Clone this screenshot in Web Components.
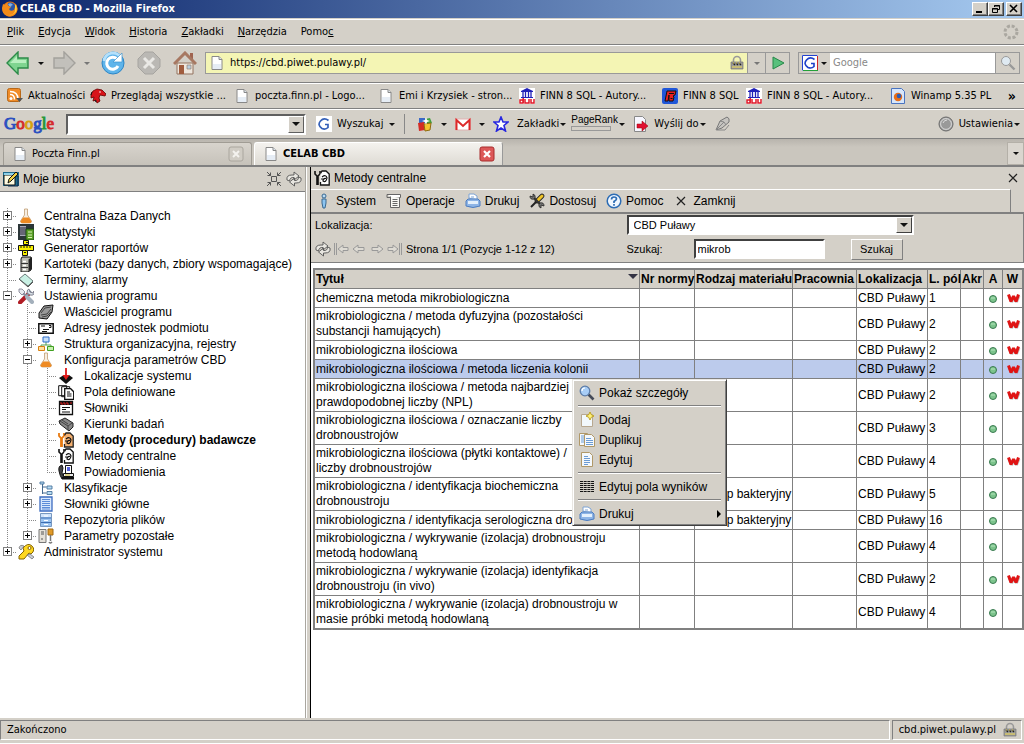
<!DOCTYPE html>
<html lang="pl">
<head>
<meta charset="utf-8">
<title>CELAB CBD - Mozilla Firefox</title>
<style>
html, body { margin: 0; height: 100%; }
body {
  --face: #d4d0c8; --shade: #808080; --ui: "DejaVu Sans Condensed", "Noto Sans", sans-serif; --app: "Liberation Sans", Arial, sans-serif;
  background: var(--face); color: #000; font: 11px/14px var(--ui); overflow: hidden;
}
</style>
</head>
<body>
<browser-window>
  <title-bar slot="bars" label="CELAB CBD - Mozilla Firefox"></title-bar>
  <menu-bar slot="bars"></menu-bar>
  <nav-bar slot="bars"></nav-bar>
  <bookmark-bar slot="bars">
    <bookmark-item icon="rss">Aktualności</bookmark-item>
    <bookmark-item icon="dino">Przeglądaj wszystkie ...</bookmark-item>
    <bookmark-item icon="page">poczta.finn.pl - Logo...</bookmark-item>
    <bookmark-item icon="page">Emi i Krzysiek - stron...</bookmark-item>
    <bookmark-item icon="duw">FINN 8 SQL - Autory...</bookmark-item>
    <bookmark-item icon="finn">FINN 8 SQL</bookmark-item>
    <bookmark-item icon="duw">FINN 8 SQL - Autory...</bookmark-item>
    <bookmark-item icon="winamp">Winamp 5.35 PL</bookmark-item>
  </bookmark-bar>
  <google-bar slot="bars"></google-bar>
  <tab-strip slot="bars">
    <page-tab>Poczta Finn.pl</page-tab>
    <page-tab active>CELAB CBD</page-tab>
  </tab-strip>
  <side-panel>
    <tree-node icon="flask" state="plus" label="Centralna Baza Danych" first></tree-node>
    <tree-node icon="stats" state="plus" label="Statystyki"></tree-node>
    <tree-node icon="generator" state="plus" label="Generator raportów"></tree-node>
    <tree-node icon="cabinet" state="plus" label="Kartoteki (bazy danych, zbiory wspomagające)"></tree-node>
    <tree-node icon="diamond" label="Terminy, alarmy"></tree-node>
    <tree-node icon="tools" state="minus" label="Ustawienia programu">
      <tree-node icon="owner" label="Właściciel programu"></tree-node>
      <tree-node icon="address" label="Adresy jednostek podmiotu"></tree-node>
      <tree-node icon="org" state="plus" label="Struktura organizacyjna, rejestry"></tree-node>
      <tree-node icon="flask" state="minus" label="Konfiguracja parametrów CBD">
        <tree-node icon="location" label="Lokalizacje systemu"></tree-node>
        <tree-node icon="fields" label="Pola definiowane"></tree-node>
        <tree-node icon="dict" label="Słowniki"></tree-node>
        <tree-node icon="rock" label="Kierunki badań"></tree-node>
        <tree-node icon="methodhot" label="Metody (procedury) badawcze" current></tree-node>
        <tree-node icon="method" label="Metody centralne"></tree-node>
        <tree-node icon="notify" label="Powiadomienia" last></tree-node>
      </tree-node>
      <tree-node icon="classes" state="plus" label="Klasyfikacje"></tree-node>
      <tree-node icon="list" state="plus" label="Słowniki główne"></tree-node>
      <tree-node icon="repo" label="Repozytoria plików"></tree-node>
      <tree-node icon="params" state="plus" label="Parametry pozostałe" last></tree-node>
    </tree-node>
    <tree-node icon="keys" state="plus" label="Administrator systemu" last></tree-node>
  </side-panel>
  <work-panel slot="main"></work-panel>
  <status-bar slot="status"></status-bar>
</browser-window>

<script>
const ICONS = {
  firefox: '<circle cx="8" cy="8" r="7.5" fill="#e8740c"/><circle cx="8.5" cy="6.5" r="5" fill="#2c57a8"/><path d="M6 3q3-2 5 1-2 0-2 2-2 0-3-3z" fill="#7fb2e8"/><path d="M1 3l2 1q1-2 3-2-1 2 1 3l2 1-2 2q1 3 5 1l2-6q3 5 0 9-4 5-9 3-5-2-5-8z" fill="#f28a1a"/><path d="M13 3q3 4 1 8-3 4-7 3 5 0 6-4z" fill="#ffd03c"/>',
  back: ['24 24', '<path d="M1 12L12 1v6h10v10H12v6z" fill="#7fd490" stroke="#2c8a48" stroke-width="1.4"/><path d="M4 12l7-7v4h9v3z" fill="#b9efc0"/>'],
  fwd: ['24 24', '<path d="M23 12L12 1v6H2v10h10v6z" fill="#c2c0bb" stroke="#a3a19c" stroke-width="1.4"/>'],
  reload: ['24 24', '<circle cx="12" cy="12" r="11" fill="#5fb4ea" stroke="#2d86c6"/><path d="M3 10a9 9 0 0 1 17-3" fill="none" stroke="#b4e0fb" stroke-width="3"/><path d="M17 15a6 6 0 1 1-1-7" fill="none" stroke="#fff" stroke-width="3"/><path d="M12 11h9V2z" fill="#fff" stroke="#3b94d0" stroke-width=".7"/>'],
  stop: ['24 24', '<path d="M8 1h8l7 7v8l-7 7H8l-7-7V8z" fill="#bab8b4" stroke="#a6a4a0"/><path d="M7 7l10 10M17 7L7 17" stroke="#e9e8e5" stroke-width="3"/>'],
  home: ['24 24', '<path d="M4 12h16v11H4z" fill="#ede6dd" stroke="#93735f"/><path d="M17 2h3v6h-3z" fill="#a06450"/><path d="M1 13L12 2l11 11" fill="none" stroke="#a77862" stroke-width="3"/><path d="M6 14h5v9H6z" fill="#a05c3e"/><path d="M14 14h4v4h-4z" fill="#b9cfe0" stroke="#8c7262" stroke-width=".6"/>'],
  page: '<path d="M3 1.5h7l3 3v10H3z" fill="#fff" stroke="#888"/><path d="M10 1.5v3h3" fill="#dde6ee" stroke="#888"/><path d="M4 9h8v5H4z" fill="#e6edf5"/>',
  lock: '<path d="M4.500 7V5a3.500 3.500 0 0 1 7 0v2" fill="none" stroke="#999" stroke-width="1.600"/><path d="M2 7h12v7H2z" fill="#9c9c98" stroke="#777" stroke-width=".7"/><path d="M4 8l2 2M7 8l2 2M10 8l2 2" stroke="#222" stroke-width="1.200"/><path d="M4 8h1M7 8h1M10 8h1M3 12h10" stroke="#f3dc50"/>',
  go: '<path d="M3 2l11 6-11 6z" fill="#58c07c" stroke="#278848"/>',
  g: '<path d="M0 0h16v16H0z" fill="#fff"/><path d="M.5 15.500V.5h15" fill="none" stroke="#2442d0"/><path d="M15.500 1v15" stroke="#d02626"/><path d="M1 15.500h15" stroke="#24a038"/><path d="M12.500 4.500Q8 1 4.500 5T6 12.500Q9.500 14 12 11.500V8.500H9" fill="none" stroke="#1c3fc8" stroke-width="1.600"/>',
  gplain: '<path d="M0 0h16v16H0z" fill="#fff"/><path d="M12.500 4.500Q8 1 4.500 5T6 12.500Q9.500 14 12 11.500V8.500H9" fill="none" stroke="#3460b8" stroke-width="1.700"/>',
  mag: '<path d="M9.500 9.500l5 5" stroke="#999" stroke-width="2.400"/><circle cx="6" cy="6" r="4.500" fill="#dfeaf2" stroke="#999"/>',
  throb: '<circle cx="8" cy="8" r="6" fill="none" stroke="#aaa7a0" stroke-width="3" stroke-dasharray="3 1.700"/>',
  rss: '<rect x=".5" y=".5" width="13" height="13" rx="2" fill="#f08c28" stroke="#b86818"/><circle cx="4" cy="10.500" r="1.500" fill="#fff"/><path d="M3 6.500q4.500 0 4.500 5M3 3.500q8 0 8 8" fill="none" stroke="#fff" stroke-width="1.500"/><path d="M9 10h7l-3.500 4z" fill="#555"/>',
  dino: '<path d="M1 6l2-3 4-2 5 1 4 4-1 2-5-1-1 3 1 3-3 2-1-3-3 1 1-4-3 1z" fill="#d8141a" stroke="#600" stroke-width=".8"/><path d="M2 4l-1 3M5 12l1 2" stroke="#111"/><circle cx="10" cy="4" r=".8" fill="#fff"/>',
  duw: '<path d="M0 0h16v16H0z" fill="#fff"/><path d="M8 0l6 3v1H2V3zM2 9h12v1H2z" fill="#2020b8"/><path d="M4 4v5M6.500 4v5M9.500 4v5M12 4v5" stroke="#2020b8" stroke-width="1.300"/><path d="M1 12h3v3H1zM6 11v4h4v-4M12 11v4h3v-4M4.200 10v5" fill="none" stroke="#e01828" stroke-width="1.500"/>',
  finn: '<rect width="16" height="16" rx="2" fill="#1f56d8"/><path d="M3 13L5 3h9l-1 4-2 1 1 1-1 4H7V7L6 13z" fill="#e82020" stroke="#111"/><path d="M7 5.500h5M8.500 10.500h2" stroke="#111"/>',
  winamp: '<path d="M1.500.5h10l3 3v12h-13z" fill="#d7e6fa" stroke="#4a74c0"/><circle cx="8" cy="9" r="4.200" fill="#e86e18"/><circle cx="9" cy="8" r="2.300" fill="#2c5cb4"/>',
  games: '<path d="M2 2h6v5H2z" fill="#3a68c8"/><path d="M8 3l5-1 2 5-5 2z" fill="#40a040"/><path d="M1 7l6-1 1 8-6 1z" fill="#d42c24"/><path d="M7 8l7-1-1 7-5 1z" fill="#f4c430" stroke="#906c10"/><path d="M9 1l1 3 3 1-3 1-1 3-1-3-3-1 3-1z" fill="#fff"/>',
  gmail: '<path d="M.5 3h15v11H.5z" fill="#fff" stroke="#e0b0b0"/><path d="M1.500 14V4L8 10l6.500-6v10" fill="none" stroke="#dc2a2a" stroke-width="2"/>',
  star: '<path d="M8 1l2 5h5l-4 3.500 1.500 5.500L8 12l-4.500 3L5 9.500 1 6h5z" fill="#fff" stroke="#2828e0" stroke-width="1.600"/>',
  send: '<path d="M1.500.5h8l3 3v12h-11z" fill="#f7f7ff" stroke="#888"/><path d="M4 8h5V5l6 5-6 5v-3H4z" fill="#e01030" stroke="#900" stroke-width=".5"/>',
  pencil: '<path d="M1 14l4-9 7-4q3 1 2 5l-7 6z" fill="#c6c4c0" stroke="#777"/><path d="M5 5l4 1 2 3M1 14l8-8M2 14h8l4-5" fill="none" stroke="#888"/>',
  orb: '<circle cx="8" cy="8" r="7" fill="#a6a6a6" stroke="#686868"/><circle cx="8" cy="8" r="5.400" fill="#999" stroke="#d8d8d8"/><path d="M5 7q1-3 4-3" fill="none" stroke="#ddd"/>',
  desk: '<path d="M0 1h16v14H0z" fill="#1f6a8c"/><path d="M1 4h11v10H1z" fill="#fffbe0" stroke="#111"/><path d="M1 2h12v2H1z" fill="#8fd0e8"/><path d="M5 12l1-4 7-7 2 2-7 7z" fill="#f0d040" stroke="#111"/><path d="M13 5h2v10H5" fill="none" stroke="#102848"/>',
  collapse: '<path d="M5.500 5.500h5v5h-5z" fill="none" stroke="#555"/><path d="M1 1l3.500 3.500M15 1l-3.500 3.500M1 15l3.500-3.500M15 15l-3.500-3.500M4.500 1.500v3h-3M11.500 1.500v3h3M4.500 14.500v-3h-3M11.500 14.500v-3h3" fill="none" stroke="#555"/>',
  refresh: '<path d="M1 9q-1-5 5-5h2V1l5 4-5 4V6.500Q4 6 3.500 10zM15 7q1 5-5 5H8.500v3l-5-4 5-4v2.500q4 .5 4-3.500z" fill="#e8e6e0" stroke="#555" stroke-width=".9"/>',
  flask: '<path d="M6.500 1h3v6l4 6q0 2-2 2h-7q-2 0-2-2l4-6z" fill="#f6eee2" stroke="#b99060" stroke-width=".7"/><path d="M5 9.500h6l2.500 4q0 1.500-2 1.500h-7q-2 0-2-1.500z" fill="#ee8a22"/>',
  stats: '<path d="M0 0h16v16H0z" fill="#2b3538"/><path d="M2 2h6v10H2z" fill="#aab"/><path d="M3 3v8M5 3v8M7 3v8" stroke="#223"/><path d="M8 5h8v11H8z" fill="#5aa028" stroke="#184810"/><path d="M10 8h4M10 11h4M10 13.500h4" stroke="#d9f0b4"/>',
  generator: '<path d="M.5 5.500h15v5H.5z" fill="#f8f000" stroke="#111"/><path d="M5.500.5h5v4h-5zM4.500 10.500h5v5h-5z" fill="#f8f000" stroke="#111"/><path d="M3 6v2M6 6v2M9 6v2M12 6v2M6 12.500h2M8 2.500h2" stroke="#111"/>',
  cabinet: '<path d="M4 1h9v13l-3 2H3V3z" fill="#bcbcb4" stroke="#111"/><path d="M10.500 3.500v12L14 13V1z" fill="#222"/><path d="M3 7.500h7M3 11.500h7" stroke="#333"/><path d="M5 5.500h3M5 9.500h3M5 13.500h3" stroke="#fff" stroke-width="1.500"/>',
  diamond: '<path d="M1 7l6-5 8 7-5 5z" fill="#c9f0e4" stroke="#6a7a78"/><path d="M1 7l9 8 5-5" fill="none" stroke="#555"/>',
  tools: '<path d="M2 14.500L10 6.500" stroke="#b01c24" stroke-width="4" stroke-linecap="round"/><path d="M8 8l5-5" stroke="#8a98a4" stroke-width="2"/><path d="M11 1l1 3 3 1 1-2q1 5-4 4L9 5q0-4 2-4z" fill="#d8e0e6" stroke="#667" stroke-width=".8"/><path d="M3 3l5 5" stroke="#8890a0" stroke-width="2.400"/><path d="M9 9l5 5" stroke="#a4b0bc" stroke-width="4" stroke-linecap="round"/><path d="M1 1h3l3 3-3 3-3-3z" fill="#e6eaee" stroke="#778" stroke-width=".8"/>',
  owner: '<path d="M1 9l5-7 9-1-1 7-5 7-8-1z" fill="#999" stroke="#111"/><path d="M3 9l4-5 6-1M3 11l6-1 4-5M4 13l5-1 4-4" fill="none" stroke="#444"/>',
  address: '<path d="M.8 3.800h14.400v9.400H.8z" fill="#fff" stroke="#111" stroke-width="1.500"/><path d="M3 6h4M11 5.500h2v2h-2M5 9.500h6M4 11.500h5" fill="none" stroke="#111"/>',
  org: '<path d="M8 6v3M3 12V9h10v3" fill="none" stroke="#58a050"/><path d="M5 1h6v5H5z" fill="#c8e0fa" stroke="#2c6cc8"/><path d="M.5 10.500h6v4h-6z" fill="#ffe0a0" stroke="#d88010"/><path d="M9.500 10.500h6v4h-6z" fill="#c8f0b0" stroke="#40a020"/>',
  location: '<path d="M1 10l5-3h5l4 3-7 6z" fill="#111"/><path d="M8 0v9" stroke="#e01818" stroke-width="1.800"/><path d="M4.500 7h7L8 12z" fill="#e01818"/>',
  fields: '<path d="M.7 1.700h8v10h-8zM3.700 2.700h8v10h-8z" fill="#fff" stroke="#111"/><path d="M6.700 4.700h6l3 3v7.600h-9z" fill="#fff" stroke="#111" stroke-width="1.300"/><path d="M9 8h3M9 10h4.500M9 12h4.500" stroke="#111"/>',
  dict: '<path d="M1.500 1.500h13v13h-13z" fill="#fff" stroke="#111" stroke-width="1.300"/><path d="M1 1h14v4H1z" fill="#111"/><path d="M3 2v2h2M6 2v2h2M9 2v2h2M13 2v2" fill="none" stroke="#e02020"/><path d="M4 7.500h8M4 9.500h4M4 12h8" stroke="#111"/>',
  rock: '<path d="M1 5l6-3 8 5v4l-4 4-9-7z" fill="#888" stroke="#222"/><path d="M2 5l8 5 4-3M10 10v4M4 4l6 4" stroke="#444" fill="none"/>',
  method: '<path d="M1 1v3l2 2v9M6 1v3L4 6v9" fill="none" stroke="#111" stroke-width="1.600"/><path d="M6.500 3.500L8 1h4l3.200 3v11H6.500v-3" fill="#fff" stroke="#111" stroke-width="1.300"/><path d="M8 7q4-3 5 1-1 5-4 3 0-3 3-2.500M7 9h4" fill="none" stroke="#111" stroke-width="1.200"/>',
  methodhot: '<path d="M1 1v3l2 2v9M6 1v3L4 6v9" fill="none" stroke="#e87a10" stroke-width="1.800"/><path d="M6.500 3.500L8 1h4l3.200 3v11H6.500v-3" fill="#f4b070" stroke="#222" stroke-width="1.300"/><path d="M8 7q4-3 5 1-1 5-4 3 0-3 3-2.500M7 9h4" fill="none" stroke="#111" stroke-width="1.200"/>',
  notify: '<path d="M4 1Q0 2 1 7t3 8l2-2-2-4 1-5z" fill="#444" stroke="#111"/><path d="M7.500 1.500h6v8h-6z" fill="#fff" stroke="#111"/><path d="M9 4h3M9 6h3" stroke="#2030d0" stroke-width="1.300"/><path d="M5.500 9.500h10v3h-10z" fill="#eee" stroke="#111"/><path d="M4 13h12v2.500H4z" fill="#111"/><path d="M7 11h5" stroke="#c8b020"/>',
  classes: '<path d="M4.500 3v11M4.500 7h4M4.500 13h4" fill="none" stroke="#446a90"/><path d="M2 2h4v2H2zM9 6h5v3H9zM9 11.500h5v3H9z" fill="#b8dcf4" stroke="#48749c" stroke-width=".9"/>',
  list: '<path d="M2 1h12v14H2z" fill="#d8e8fc" stroke="#3c6cc0" stroke-width="1.300"/><path d="M4 3.500h8M4 5.500h8M4 7.500h8M4 9.500h8M4 11.500h8M4 13h8" stroke="#5c8cd8"/>',
  repo: '<path d="M2.500 1.500h11v13h-11z" fill="#9cc4f0" stroke="#7898c0"/><path d="M3 2h10v3H3z" fill="#d0e4fa"/><path d="M3 6h10M3 10.500h10" stroke="#3c6cb0"/><path d="M6 4h4M6 8.500h4M6 12.500h4" stroke="#fff"/>',
  params: '<path d="M1 1.500h7v13H1z" fill="#e4e0d8" stroke="#777"/><path d="M3 4h3M3 6h3M3 11h2" stroke="#555"/><path d="M10 1h5v6h-5z" fill="#e09a28" stroke="#a06810"/><path d="M12.500 7v6M11 14q1 2 3 0" stroke="#777" stroke-width="1.500" fill="none"/>',
  keys: '<path d="M5 4q5-6 9-2t-1 8L11 9l-5 6H1v-3l5-5z" fill="#ffd820" stroke="#866400"/><circle cx="11.500" cy="4" r="1.500" fill="#fff" stroke="#866400"/><path d="M1 4q1-4 5-2L3 6zM9 11l5 4 2-2-4-3z" fill="#c8ccd4" stroke="#777" stroke-width=".8"/>',
  info: '<circle cx="8" cy="3" r="2" fill="#b9dcf5" stroke="#3a6890"/><path d="M6 6h4v4l-1 5H7l-1-5z" fill="#8cc4f0" stroke="#3a6890"/>',
  ops: '<path d="M1 1.500h13.500v3H6" fill="#fff" stroke="#666"/><path d="M1 1.500v3h3.500" fill="none" stroke="#666"/><path d="M4.500 3.500v11h9v-10" fill="#f8f8f4" stroke="#666"/><path d="M6.500 6.500h5M6.500 8.500h5M6.500 10.500h5M6.500 12.500h5" stroke="#666"/>',
  print: '<path d="M4 5V1h5l3 2v4z" fill="#fff" stroke="#7ea4d4"/><path d="M1 8l2-2h10l2 2v5q-7 3-14 0z" fill="#8db4e6" stroke="#4c7cc0"/><path d="M3 8h10v3H3z" fill="#e4f0fc"/><path d="M6 4h3M5.500 6h5" stroke="#7ea4d4"/>',
  custom: '<path d="M2 14L8 8" stroke="#222" stroke-width="2"/><path d="M8 8l5-5" stroke="#222" stroke-width="4.600" stroke-linecap="round"/><path d="M8.500 7.500L13 3" stroke="#f0c428" stroke-width="3" stroke-linecap="round"/><path d="M4 4l8 8" stroke="#333" stroke-width="2.400"/><path d="M1 3q0 4 4 3L6 5q1-3-2-4v3zM15 13q0-4-4-3l-1 1q-1 3 2 4v-3z" fill="#777" stroke="#222" stroke-width=".8"/>',
  help: '<circle cx="8" cy="8" r="6.800" fill="#f0f7ff" stroke="#2c6cb4" stroke-width="1.500"/><path d="M5.500 6.500Q5.500 4 8 4t2.500 2Q10.500 7 8 8.500V10M8 11v1.800" fill="none" stroke="#2c6cb4" stroke-width="1.700"/>',
  close: '<path d="M4 4l8 8M12 4l-8 8" stroke="#222" stroke-width="1.200"/>',
  first: '<path d="M1.500 2v12M3.500 2v12" stroke="#999"/><path d="M5 8l5-4v2.500h5v3h-5V12z" fill="#dedbd4" stroke="#999"/>',
  prev: '<path d="M2 8l5-4v2.500h6v3H7V12z" fill="#dedbd4" stroke="#999"/>',
  next: '<path d="M14 8L9 4v2.500H3v3h6V12z" fill="#dedbd4" stroke="#999"/>',
  last: '<path d="M14.500 2v12M12.500 2v12" stroke="#999"/><path d="M11 8L6 4v2.500H1v3h5V12z" fill="#dedbd4" stroke="#999"/>',
  dot: '<circle cx="8" cy="9" r="3.500" fill="#7cc48c" stroke="#3a7a50"/><path d="M6 8h4" stroke="#b4e4bc"/>',
  wmark: '<g fill="none" stroke-linejoin="bevel"><path d="M4 6l2.500 6L9 7l2.500 5L14 6" stroke="#888" stroke-width="3" opacity=".5"/><path d="M3.500 4.500L6 11.500 8.500 6 11 11.500l2.500-7" stroke="#e01414" stroke-width="3"/></g>',
  lens: '<path d="M9.500 9.500l5 5" stroke="#444a58" stroke-width="2.600"/><circle cx="6" cy="6" r="4.800" fill="#a8cdf6" stroke="#5c7ca8" stroke-width="1.300"/><path d="M3 6q0-3 3-3" fill="none" stroke="#fff" stroke-width="1.200"/>',
  add: '<path d="M2.500 2.500h11v12h-11z" fill="#f2f8fc" stroke="#b8a890"/><path d="M11 0l1.300 2.700L15 4l-2.700 1.300L11 8 9.700 5.300 7 4l2.700-1.300z" fill="#fff27a" stroke="#b89a18" stroke-width=".9"/>',
  copy: '<path d="M.5 1.500h8v12h-8z" fill="#f4f8fc" stroke="#b09868"/><path d="M2 4h3M2 6h3M2 8h3M2 10h3" stroke="#6c9cd4"/><path d="M5.500 2.500h7l3 3v9h-10z" fill="#f4f8fc" stroke="#b09868"/><path d="M7 6.500h5M7 8.500h7M7 10.500h7M7 12.500h7" stroke="#6c9cd4"/>',
  edit: '<path d="M2.500.5h8l3 3v11h-11z" fill="#f4f8fc" stroke="#b09868"/><path d="M5 4.500h4M5 6.500h6M5 8.500h6M5 10.500h6M5 12.500h4" stroke="#6c9cd4"/>',
  grid: '<path d="M1 2.500h14M1 4.500h14M1 6.500h14M1 8.500h14M1 10.500h14M1 12.500h14" stroke="#111" stroke-dasharray="3 .7"/>',
  tabclose: '<rect x="1" y="1" width="14" height="14" rx="2" fill="#d0ccc4" stroke="#aaa69e"/><path d="M5 5l6 6M11 5l-6 6" stroke="#f4f2ee" stroke-width="2"/>',
  tabclosehot: '<rect x="1" y="1" width="14" height="14" rx="2" fill="#dc5858" stroke="#a82c2c"/><path d="M5 5l6 6M11 5l-6 6" stroke="#fff" stroke-width="2.200"/>'
};

/* Registers an element whose shadow root is filled from its stylesheet and markup. */
function define(name, css, markup) {
  customElements.define(name, class extends HTMLElement {
    connectedCallback() {
      if (this.shadowRoot) return;
      const html = typeof markup === 'function' ? markup(this) : markup;
      this.attachShadow({ mode: 'open' }).innerHTML =
        `<style>:host,*{box-sizing:border-box}button,input,select{font:inherit;color:inherit;margin:0;padding:0;border:0;background:none;border-radius:0;outline:0}a{color:inherit;text-decoration:none}${css}</style>${html}`;
    }
  });
}

define('x-icon', ':host{display:block;flex:none;width:16px;height:16px}:host([big]){width:24px;height:24px}svg{display:block;width:100%;height:100%}', el => {
  const d = ICONS[el.getAttribute('name')];
  const [box, body] = Array.isArray(d) ? d : ['16 16', d];
  return `<svg viewBox="0 0 ${box}" aria-hidden="true">${body}</svg>`;
});
define('down-caret', ':host{display:block;flex:none;width:0;height:0;border:3px solid transparent;border-top-color:#111;border-bottom:0}:host([pale]){border-top-color:#777}:host([wide]){border-width:4px 4px 0}', '');

define('browser-window', `
:host{display:flex;flex-direction:column;height:100vh;min-width:0}
main{flex:1;display:flex;min-height:0;border-top:1px solid #808080}
.split{flex:none;width:6px;background:var(--face);border-left:1px solid #a9a69f;border-right:1px solid #000;box-shadow:inset 1px 0 #fff}`,
`<slot name="bars"></slot><main><slot></slot><div class="split"></div><slot name="main"></slot></main><slot name="status"></slot>`);

define('title-bar', `
:host{display:flex;align-items:center;height:18px;padding:0 2px;background:linear-gradient(90deg,#0a246a,#a6caf0);color:#fff;font-weight:bold}
h1{font:inherit;margin:0 auto 0 2px}
button{width:16px;height:14px;background:var(--face);border:1px solid;border-color:#fff #404040 #404040 #fff;box-shadow:inset -1px -1px #808080}
button+button+button{margin-left:2px}svg{display:block;margin:auto}`,
el => `<x-icon name="firefox"></x-icon><h1>${el.getAttribute('label')}</h1>
<button aria-label="Minimalizuj"><svg width="10" height="10"><path d="M1 8h6" stroke="#000" stroke-width="2"/></svg></button>
<button aria-label="Przywróć"><svg width="10" height="10"><path d="M3.500 3V1.500h5v4H7M3 2h6M1.500 4.500h5v4h-5zM1 5h6" fill="none" stroke="#000"/></svg></button>
<button aria-label="Zamknij"><svg width="10" height="10"><path d="M1 1l7 7M8 1L1 8" stroke="#000" stroke-width="1.600"/></svg></button>`);

define('menu-bar', `
:host{display:flex;align-items:center;height:26px;padding:0 5px 0 7px;border-top:1px solid #fff;border-bottom:1px solid #808080;margin-top:1px}
nav{display:flex;gap:14px;margin-right:auto}`,
`<nav><a href="#"><u>P</u>lik</a><a href="#"><u>E</u>dycja</a><a href="#"><u>W</u>idok</a><a href="#"><u>H</u>istoria</a><a href="#"><u>Z</u>akładki</a><a href="#"><u>N</u>arzędzia</a><a href="#">Pomo<u>c</u></a></nav><x-icon name="throb"></x-icon>`);

define('nav-bar', `
:host{display:flex;align-items:center;height:38px;padding:0 4px 2px 6px;border-top:1px solid #fff;border-bottom:1px solid #808080}
.tools{display:flex;align-items:center;gap:7px;margin-right:8px}.tools down-caret{margin:0 1px}.wide{margin-left:3px;display:flex;gap:12px}
.box{display:flex;height:22px;border:1px solid #999;align-items:stretch}
.url{flex:1;min-width:0;background:#f4f5b4;margin-right:8px}.search{flex:0 0 222px}
.url x-icon{align-self:center}.url>x-icon:first-child{margin:0 5px 0 3px}
input{flex:1;min-width:0}.search input{background:#fff;padding-left:3px;color:#888}input::placeholder{color:#888}
.box button{display:grid;place-items:center;background:var(--face);border-left:1px solid #999}
.drop{width:18px}.go{width:24px}.engine.engine{display:flex;align-items:center;gap:3px;width:31px;padding-left:3px;border:0}
.lock{margin-right:2px}`,
`<div class="tools"><x-icon big name="back"></x-icon><down-caret></down-caret><x-icon big name="fwd"></x-icon><down-caret pale></down-caret><span class="wide"><x-icon big name="reload"></x-icon><x-icon big name="stop"></x-icon><x-icon big name="home"></x-icon></span></div>
<div class="box url"><x-icon name="page"></x-icon><input aria-label="Adres" value="https://cbd.piwet.pulawy.pl/"><x-icon class="lock" name="lock"></x-icon><button class="drop" aria-label="Historia adresów"><down-caret pale></down-caret></button><button class="go" aria-label="Przejdź"><x-icon name="go"></x-icon></button></div>
<div class="box search"><button class="engine" aria-label="Wyszukiwarka"><x-icon name="g"></x-icon><down-caret></down-caret></button><input aria-label="Szukaj w Google" placeholder="Google"><button class="go" aria-label="Szukaj"><x-icon name="mag"></x-icon></button></div>`);

define('bookmark-bar', `
:host{display:grid;grid-template-columns:83px 144px 144px 141px 143px 84px 144px 1fr auto;align-items:center;height:26px;padding:0 8px 0 7px;border-top:1px solid #fff;border-bottom:1px solid #808080}
button{font-weight:bold;font-size:14px}`, `<slot></slot><button aria-label="Więcej zakładek">»</button>`);
define('bookmark-item', `:host{display:block;min-width:0}a{display:flex;align-items:center;gap:5px;white-space:nowrap}`,
el => `<a href="#"><x-icon name="${el.getAttribute('icon')}"></x-icon><span><slot></slot></span></a>`);

define('google-bar', `
:host{display:flex;align-items:center;height:30px;padding:0 4px;border-top:1px solid #fff;border-bottom:1px solid #808080;white-space:nowrap}
.logo{font:17px/20px "Liberation Serif",serif;width:62px;color:#2c50c0;-webkit-text-stroke:1px}.r{color:#d42c2c}.y{color:#d8a010}.gr{color:#289838}
.combo{display:flex;width:240px;height:21px;background:#fff;border:2px solid;border-color:#606060 #fff #fff #606060;margin-right:10px}
.combo input{flex:1;min-width:0}.combo button{width:16px;display:grid;place-items:center;background:var(--face);border:1px solid;border-color:#fff #606060 #606060 #fff}
.item{display:flex;align-items:center;gap:5px}.pair{gap:8px;margin-right:8px}
.find{width:79px}.find down-caret{margin-left:auto}
.grip{width:1px;height:20px;background:#888;margin:0 12px 0 9px}
.marks{gap:1px;margin:0 5px 0 8px}.rank{font:10px/10px var(--app);width:46px;margin-right:2px;align-self:flex-start;margin-top:5px}
.meter{height:5px;width:40px;border:1px solid #999;margin-top:1px}
.send{margin:0 9px 0 8px}.send down-caret,.opt down-caret{margin-left:-4px}.opt{margin-left:auto}`,
`<div class="logo">G<span class="r">o</span><span class="y">o</span>g<span class="gr">l</span><span class="r">e</span></div>
<div class="combo"><input aria-label="Fraza Google"><button aria-label="Rozwiń"><down-caret wide></down-caret></button></div>
<a href="#" class="item find"><x-icon name="gplain"></x-icon>Wyszukaj<down-caret></down-caret></a><span class="grip"></span>
<a href="#" class="item pair" aria-label="Gadżety"><x-icon name="games"></x-icon><down-caret></down-caret></a>
<a href="#" class="item pair" aria-label="Gmail"><x-icon name="gmail"></x-icon><down-caret></down-caret></a>
<x-icon name="star"></x-icon><a href="#" class="item marks">Zakładki<down-caret></down-caret></a>
<div class="rank">PageRank<div class="meter"></div></div><down-caret></down-caret>
<a href="#" class="item send"><x-icon name="send"></x-icon>Wyślij do<down-caret></down-caret></a><x-icon name="pencil"></x-icon>
<a href="#" class="item opt"><x-icon name="orb"></x-icon>Ustawienia<down-caret></down-caret></a>`);

define('tab-strip', `
:host{display:flex;align-items:stretch;gap:2px;height:27px;padding:3px 0 0 3px;background:linear-gradient(#b8b4ad,#cac6be 8px);border-bottom:1px solid #808080}
button{margin-left:auto;width:17px;display:grid;place-items:center;border:1px solid #b4b0a8;background:#dad6cf}`,
`<slot></slot><button aria-label="Lista kart"><down-caret></down-caret></button>`);
define('page-tab', `
:host{display:flex;align-items:center;width:249px;height:23px;padding:0 7px 0 8px;gap:4px;background:linear-gradient(#d8d4cd,#c6c2ba);border:1px solid #a09c94;border-bottom:0;border-radius:3px 3px 0 0}
:host([active]){background:linear-gradient(#f4f2ee,#dedbd4);font-weight:bold;border-color:#fff #999 #fff #fff}
a{flex:1}`,
el => `<x-icon name="page"></x-icon><a href="#"><slot></slot></a><x-icon name="${el.hasAttribute('active') ? 'tabclosehot' : 'tabclose'}"></x-icon>`);

define('side-panel', `
:host{display:flex;flex-direction:column;flex:0 0 305px;background:#fff;font:12px/16px var(--app)}
header{display:flex;align-items:center;gap:4px;height:25px;padding:0 3px;background:var(--face);border-bottom:1px solid #808080}
h2{font:inherit;margin:0 auto 0 0}.tree{padding-top:16px}`,
`<header><x-icon name="desk"></x-icon><h2>Moje biurko</h2><x-icon name="collapse"></x-icon><x-icon name="refresh"></x-icon></header><div class="tree"><slot></slot></div>`);

/* A tree entry: the rail beside it runs down past its nested entries to the next sibling. */
define('tree-node', `
:host{display:flex;white-space:nowrap;color:#000}
.rail{flex:none;width:18px;background:repeating-linear-gradient(#888 0 1px,transparent 1px 2px) 7px 0/1px 100% no-repeat,repeating-linear-gradient(90deg,#888 0 1px,transparent 1px 2px) 7px 8px/10px 1px no-repeat}
:host([last]) .rail{background-size:1px 9px,10px 1px}
button{display:block;width:9px;height:9px;margin:3px 3px 4px;border:1px solid #808080;background:linear-gradient(#000,#000) 1px 3px/5px 1px no-repeat,#fff}
button.plus{background:linear-gradient(#000,#000) 1px 3px/5px 1px no-repeat,linear-gradient(#000,#000) 3px 1px/1px 5px no-repeat,#fff}
.row{display:flex;gap:10px;height:16px}:host([current]) a{font-weight:bold}
.kids{padding-left:2px}`,
el => { const s = el.getAttribute('state');
  return `<div class="rail">${s ? `<button class="${s}" aria-label="${s === 'plus' ? 'Rozwiń' : 'Zwiń'}"></button>` : ''}</div><div><div class="row"><x-icon name="${el.getAttribute('icon')}"></x-icon><a href="#">${el.getAttribute('label')}</a></div><div class="kids"><slot></slot></div></div>`; });

define('work-panel', `
:host{display:flex;flex-direction:column;flex:1;min-width:0;background:#fff;font:12px/16px var(--app);position:relative}
header{display:flex;align-items:center;gap:4px;height:22px;padding:0 3px;background:var(--face)}
h2{font:inherit;margin:0 auto 0 0}
context-menu{position:absolute;left:261px;top:212px}`,
`<header><x-icon name="method"></x-icon><h2>Metody centralne</h2><x-icon name="close"></x-icon></header>
<tool-bar></tool-bar><filter-form></filter-form><method-table></method-table>
<context-menu>
<menu-entry icon="lens">Pokaż szczegóły</menu-entry><hr>
<menu-entry icon="add">Dodaj</menu-entry><menu-entry icon="copy">Duplikuj</menu-entry><menu-entry icon="edit">Edytuj</menu-entry><hr>
<menu-entry icon="grid">Edytuj pola wyników</menu-entry><hr>
<menu-entry icon="print" more>Drukuj</menu-entry></context-menu>`);

define('tool-bar', `
:host{display:block;background:var(--face);border-bottom:2px solid #808080}
nav{display:flex;gap:10px;height:23px;margin-right:13px;padding-left:5px;border-top:1px solid #fff;border-right:1px solid #808080;align-items:center}
a{display:flex;gap:4px;align-items:center}`,
`<nav>${[['info','System'],['ops','Operacje'],['print','Drukuj'],['custom','Dostosuj'],['help','Pomoc'],['close','Zamknij']].map(([i,t]) => `<a href="#"><x-icon name="${i}"></x-icon>${t}</a>`).join('')}</nav>`);

define('filter-form', `
:host{display:block;background:var(--face);border-bottom:1px solid #808080;border-right:1px solid #808080;font-size:11px}
form{display:grid;grid-template-columns:44% 1fr;grid-template-rows:22px 26px;align-items:center;padding-left:4px}
.pick{position:relative;width:287px;height:20px}
.pick select{appearance:none;width:100%;height:20px;background:#fff;padding-left:5px;border:2px solid;border-color:#404040 #fff #fff #404040}
.knob{position:absolute;right:2px;top:2px;width:16px;height:16px;display:grid;place-items:center;background:var(--face);border:1px solid;border-color:#fff #404040 #404040 #fff;pointer-events:none}
.pager,.find{display:flex;align-items:center}.pager x-icon+x-icon{margin-left:2px}.pager span{margin-left:3px}
.find label{width:67px}.find input{width:131px;height:20px;background:#fff;border:2px solid;border-color:#404040 #fff #fff #404040;padding-left:2px;margin-right:26px}
.find button{width:52px;height:21px;border:1px solid;border-color:#fff #808080 #808080 #fff}`,
`<form><label for="loc">Lokalizacja:</label><div class="pick"><select id="loc"><option>CBD Puławy</option></select><span class="knob"><down-caret wide></down-caret></span></div>
<div class="pager"><x-icon name="refresh"></x-icon><x-icon name="first"></x-icon><x-icon name="prev"></x-icon><x-icon name="next"></x-icon><x-icon name="last"></x-icon><span>Strona 1/1 (Pozycje 1-12 z 12)</span></div>
<div class="find"><label for="q">Szukaj:</label><input id="q" value="mikrob"><button type="button">Szukaj</button></div></form>`);

const ROWS = [
  ['chemiczna metoda mikrobiologiczna', '', 1, 1],
  ['mikrobiologiczna / metoda dyfuzyjna (pozostałości<br>substancji hamujących)', '', 2, 1],
  ['mikrobiologiczna ilościowa', '', 2, 1],
  ['mikrobiologiczna ilościowa / metoda liczenia kolonii', '', 2, 1, 1],
  ['mikrobiologiczna ilościowa / metoda najbardziej<br>prawdopodobnej liczby (NPL)', '', 2, 1],
  ['mikrobiologiczna ilościowa / oznaczanie liczby<br>drobnoustrojów', '', 3, 0],
  ['mikrobiologiczna ilościowa (płytki kontaktowe) /<br>liczby drobnoustrojów', '', 4, 1],
  ['mikrobiologiczna / identyfikacja biochemiczna<br>drobnoustroju', 'szczep bakteryjny', 5, 0],
  ['mikrobiologiczna / identyfikacja serologiczna drobn.', 'szczep bakteryjny', 16, 0],
  ['mikrobiologiczna / wykrywanie (izolacja) drobnoustroju<br>metodą hodowlaną', '', 4, 0],
  ['mikrobiologiczna / wykrywanie (izolacja) identyfikacja<br>drobnoustroju (in vivo)', '', 2, 1],
  ['mikrobiologiczna / wykrywanie (izolacja) drobnoustroju w<br>masie próbki metodą hodowlaną', '', 4, 0]
];
define('method-table', `
:host{display:block;margin:5px 0 0 2px;border:1px solid #808080}
table{border-collapse:collapse;table-layout:fixed;width:100%;line-height:15px}
th,td{border:1px solid #808080;padding:1px;text-align:left;white-space:nowrap;height:19px}
th{background:var(--face)}th.c{text-align:center}
.sort{display:flex;justify-content:space-between}.sort i{border:5px solid transparent;border-top-color:#334;border-bottom:0;height:0;margin-top:2px}
.sel td{background:#bccbec}x-icon{margin:auto}`,
`<table><colgroup><col><col style="width:55px"><col style="width:98px"><col style="width:64px"><col style="width:71px"><col style="width:33px"><col style="width:23px"><col style="width:19px"><col style="width:20px"></colgroup>
<thead><tr><th><div class="sort">Tytuł<i></i></div></th><th>Nr normy</th><th>Rodzaj materiału</th><th>Pracownia</th><th>Lokalizacja</th><th>L. pól</th><th>Akr</th><th class="c">A</th><th class="c">W</th></tr></thead>
<tbody>${ROWS.map(([t, m, n, w, s]) => `<tr${s ? ' class="sel"' : ''}><td>${t}</td><td></td><td>${m}</td><td></td><td>CBD Puławy</td><td>${n}</td><td></td><td><x-icon name="dot"></x-icon></td><td>${w ? '<x-icon name="wmark"></x-icon>' : ''}</td></tr>`).join('')}</tbody></table>`);

define('context-menu', `
:host{display:block;width:155px;padding:3px 1px 1px;background:var(--face);border:1px solid;border-color:#e8e6e2 #404040 #404040 #e8e6e2;box-shadow:inset 1px 1px #fff,inset -1px -1px #808080}
::slotted(hr){height:2px;margin:2px 4px 3px;border:0;border-top:1px solid #808080;background:#fff;box-sizing:border-box}`, `<slot></slot>`);
define('menu-entry', `
:host{display:block}button{display:flex;align-items:center;gap:4px;width:100%;height:20px;padding:0 4px 0 5px;text-align:left}
i{margin-left:auto;border:4px solid transparent;border-left-color:#000;border-right:0}`,
el => `<button><x-icon name="${el.getAttribute('icon')}"></x-icon><slot></slot>${el.hasAttribute('more') ? '<i></i>' : ''}</button>`);

define('status-bar', `
:host{display:flex;gap:2px;height:26px;padding:2px 2px 3px 0;border-bottom:1px solid #fff}
div{display:flex;align-items:center;border:1px solid;border-color:#808080 #fff #fff #808080;padding:0 6px}
.msg{flex:1}.host{gap:6px;padding-right:3px}`,
`<div class="msg">Zakończono</div><div class="host">cbd.piwet.pulawy.pl<x-icon name="lock"></x-icon></div>`);
</script>
</body>
</html>
